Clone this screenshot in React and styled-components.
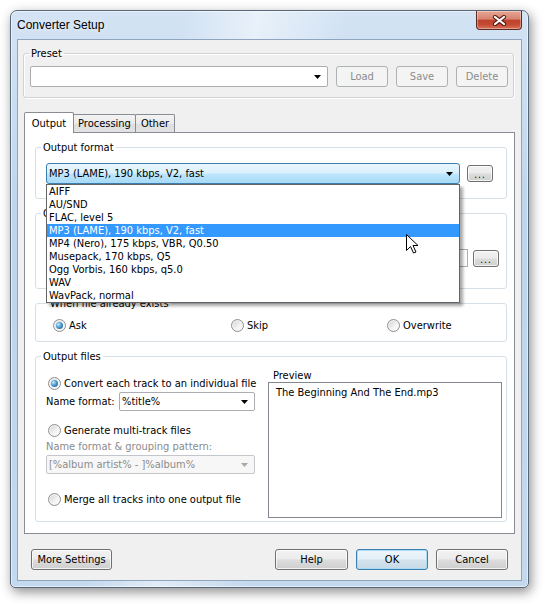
import React from 'react';
import styled, { createGlobalStyle, css } from 'styled-components';

const GlobalStyle = createGlobalStyle`
  html, body {
    margin: 0;
    padding: 0;
    background: #ffffff;
  }
  body {
    font-family: "DejaVu Sans Condensed", "Liberation Sans", Arial, sans-serif;
    font-size: 11px;
    color: #000;
  }
  * {
    box-sizing: border-box;
  }
`;

const Page = styled.div`
  width: 548px;
  height: 606px;
  padding: 10px 0 0 10px;
`;

const Window = styled.div`
  width: 519px;
  height: 578px;
  display: flex;
  flex-direction: column;
  padding: 0 6px 6px;
  border: 1px solid #56677a;
  border-radius: 7px 7px 5px 5px;
  background:
    linear-gradient(100deg, rgba(255,255,255,0) 28%, rgba(255,255,255,0.5) 40%, rgba(255,255,255,0) 55%),
    linear-gradient(#d3e3f4, #bfd5ed 35%, #c4d8ee);
  box-shadow: inset 0 0 0 1px rgba(255,255,255,0.55), 2px 4px 12px rgba(0,0,0,0.45);
`;

const TitleBar = styled.div`
  height: 28px;
  flex-shrink: 0;
  display: flex;
  justify-content: space-between;
  align-items: flex-start;
`;

const Title = styled.div`
  font-family: "Liberation Sans", Arial, sans-serif;
  font-size: 12px;
  line-height: 28px;
  text-shadow: 0 0 6px rgba(255,255,255,0.9);
`;

const CloseButton = styled.div`
  width: 46px;
  height: 19px;
  display: flex;
  align-items: center;
  justify-content: center;
  border: 1px solid #5b2a24;
  border-top: none;
  border-radius: 0 0 4px 4px;
  background: linear-gradient(#e6a797 0%, #d8826f 45%, #c0412b 52%, #c44b33 75%, #d87157 100%);
  box-shadow: inset 0 0 0 1px rgba(255,255,255,0.35);
`;

const Client = styled.div`
  flex: 1;
  display: flex;
  flex-direction: column;
  background: #f0f0f0;
  border: 1px solid #8fa4bd;
`;

const Group = styled.fieldset`
  margin: 0;
  min-width: 0;
  border: 1px solid #d5dfe5;
  border-radius: 3px;
`;

const Legend = styled.legend`
  padding: 0 2px;
  margin-left: -5px;
  line-height: 13px;
`;

const PresetGroup = styled(Group)`
  margin: 7px 7px 0 5px;
  padding: 6px 5px 10px 6px;
  border-color: #d2d2d2;
  box-shadow: inset 1px 1px 0 #fff, 1px 1px 0 #fff;
`;

const PresetLegend = styled(Legend)`
  margin-left: -1px;
`;

const PresetRow = styled.div`
  display: flex;
  gap: 8px;
  height: 21px;
`;

const Button = styled.button`
  font: inherit;
  color: #000;
  width: ${p => p.$w}px;
  height: ${p => p.$h || 21}px;
  padding: 0;
  flex-shrink: 0;
  border: 1px solid #707070;
  border-radius: 3px;
  background: linear-gradient(#f2f2f2 0%, #ebebeb 49%, #dddddd 51%, #cfcfcf 100%);
  box-shadow: inset 0 0 0 1px rgba(255,255,255,0.75);
  ${p => p.disabled && css`
    color: #8c8c8c;
    border-color: #adb2b5;
    background: #f4f4f4;
    box-shadow: none;
  `}
  ${p => p.$default && css`
    border-color: #3c7fb1;
    background: linear-gradient(#eef6fb 0%, #e4eff7 49%, #d4e4ef 51%, #c6d9e6 100%);
    box-shadow: inset 0 0 0 1px #a9dbf5;
  `}
`;

const DotsButton = styled(Button)`
  font-size: 10px;
  line-height: 10px;
  padding-top: 3px;
  letter-spacing: 1px;
`;

const Combo = styled.div`
  position: relative;
  display: flex;
  align-items: center;
  justify-content: space-between;
  flex: ${p => (p.$w ? 'none' : 1)};
  width: ${p => (p.$w ? `${p.$w}px` : 'auto')};
  height: ${p => p.$h || 21}px;
  padding: 0 6px 0 2px;
  border: 1px solid #abadb3;
  border-radius: 2px;
  background: #fff;
  white-space: nowrap;
  ${p => p.$open && css`
    border-color: #3c7fb1;
    border-radius: 3px;
    background: linear-gradient(#eaf6fd 0%, #d9f0fc 48%, #bee6fd 52%, #a7d9f5 100%);
  `}
  ${p => p.$disabled && css`
    color: #8b8b8b;
    border-color: #c3c6cb;
    background: #f7f7f7;
  `}
`;

const DropList = styled.div`
  position: absolute;
  top: calc(100% + 1px);
  left: -1px;
  width: 414px;
  border: 1px solid #646464;
  background: #fff;
  box-shadow: 3px 3px 3px rgba(0,0,0,0.35);
  z-index: 10;
`;

const DropItem = styled.div`
  height: 13px;
  line-height: 13px;
  padding-left: 2px;
  ${p => p.$selected && css`
    background: #3399ff;
    color: #fff;
  `}
`;

const Cursor = styled.svg`
  position: absolute;
  left: 359px;
  top: 49px;
`;

const TabStrip = styled.div`
  display: flex;
  align-items: flex-end;
  height: 20px;
  margin: 14px 6px 0;
  position: relative;
  z-index: 1;
`;

const Tab = styled.div`
  width: ${p => p.$w}px;
  height: ${p => (p.$active ? 21 : 18)}px;
  margin-left: ${p => (p.$first ? 0 : -1)}px;
  margin-bottom: ${p => (p.$active ? -1 : 0)}px;
  display: flex;
  align-items: center;
  justify-content: center;
  border: 1px solid #898c95;
  border-bottom: none;
  border-radius: 2px 2px 0 0;
  background: ${p => (p.$active ? '#fff' : 'linear-gradient(#f3f3f3, #ebebeb 50%, #dedede 51%, #e2e2e2)')};
  position: relative;
  z-index: ${p => (p.$active ? 2 : 1)};
`;

const TabPanel = styled.div`
  height: 402px;
  margin: 0 6px;
  padding: 8px 7px 11px 10px;
  display: flex;
  flex-direction: column;
  gap: 8px;
  border: 1px solid #898c95;
  background: #fff;
`;

const FormatGroup = styled(Group)`
  padding: 9px 0 14px 10px;
`;

const PathGroup = styled(Group)`
  padding: 6px 0 21px 10px;
`;

const ExistsGroup = styled(Group)`
  padding: 9px 0 9px 17px;
`;

const FilesGroup = styled(Group)`
  padding: 6px 4px 3px 10px;
`;

const FieldRow = styled.div`
  display: flex;
  align-items: center;
  gap: ${p => p.$gap}px;
  height: ${p => p.$h}px;
  margin-top: ${p => p.$top || 0}px;
`;

const TextField = styled.div`
  width: ${p => p.$w}px;
  height: 18px;
  border: 1px solid #abadb3;
  background: #fff;
`;

const RadioCircle = styled.span`
  width: 13px;
  height: 13px;
  flex-shrink: 0;
  display: inline-flex;
  align-items: center;
  justify-content: center;
  border: 1px solid #8e8f8f;
  border-radius: 50%;
  background: linear-gradient(135deg, #cfcfcf, #f4f4f4 60%, #ffffff);
  box-shadow: inset 0 0 0 1px #f6f6f6;
  &::after {
    content: '';
    display: ${p => (p.$checked ? 'block' : 'none')};
    width: 7px;
    height: 7px;
    border-radius: 50%;
    background: radial-gradient(circle at 35% 35%, #c6ecfc 0%, #4a9bd4 45%, #1c4f80 100%);
  }
`;

const RadioLabel = styled.label`
  display: flex;
  align-items: center;
  gap: 3px;
  height: 13px;
  line-height: 13px;
  white-space: nowrap;
  margin-left: ${p => p.$indent || 0}px;
  margin-top: ${p => p.$top || 0}px;
`;

const ExistsRow = styled.div`
  display: grid;
  grid-template-columns: 178px 156px auto;
  height: 13px;
`;

const FilesBody = styled.div`
  display: grid;
  grid-template-columns: 209px 234px;
  column-gap: 13px;
`;

const LeftColumn = styled.div`
  display: flex;
  flex-direction: column;
`;

const RightColumn = styled.div`
  display: flex;
  flex-direction: column;
`;

const NameLabel = styled.span`
  width: 73px;
  flex-shrink: 0;
`;

const GrayLabel = styled.div`
  color: #8b8b8b;
  line-height: 13px;
  margin-top: 3px;
  white-space: nowrap;
`;

const PreviewLabel = styled.div`
  line-height: 13px;
  margin-left: 5px;
`;

const PreviewBox = styled.div`
  height: 136px;
  padding: 3px 7px;
  line-height: 13px;
  border: 1px solid #828790;
  background: #fff;
  white-space: nowrap;
`;

const ButtonBar = styled.div`
  display: flex;
  gap: 8px;
  height: 21px;
  margin: 15px 13px 0;
`;

const Spacer = styled.div`
  flex: 1;
`;

const Arrow = ({ color = '#000' }) => (
  <svg width="7" height="4" viewBox="0 0 7 4">
    <path d="M0 0H7L3.5 4Z" fill={color} />
  </svg>
);

const CloseIcon = () => (
  <svg width="15" height="11" viewBox="0 0 15 11">
    <path d="M3 2 L12 9 M12 2 L3 9" stroke="#5a1d14" strokeWidth="4.2" strokeLinecap="round" />
    <path d="M3 2 L12 9 M12 2 L3 9" stroke="#ffffff" strokeWidth="2.2" strokeLinecap="round" />
  </svg>
);

const formats = [
  'AIFF',
  'AU/SND',
  'FLAC, level 5',
  'MP3 (LAME), 190 kbps, V2, fast',
  'MP4 (Nero), 175 kbps, VBR, Q0.50',
  'Musepack, 170 kbps, Q5',
  'Ogg Vorbis, 160 kbps, q5.0',
  'WAV',
  'WavPack, normal',
];

const Radio = ({ checked, children, indent, top }) => (
  <RadioLabel $indent={indent} $top={top}>
    <RadioCircle $checked={checked} />
    {children}
  </RadioLabel>
);

export default function App() {
  return (
    <>
      <GlobalStyle />
      <Page>
        <Window>
          <TitleBar>
            <Title>Converter Setup</Title>
            <CloseButton>
              <CloseIcon />
            </CloseButton>
          </TitleBar>
          <Client>
            <PresetGroup>
              <PresetLegend>Preset</PresetLegend>
              <PresetRow>
                <Combo>
                  <span />
                  <Arrow />
                </Combo>
                <Button $w={52} disabled>Load</Button>
                <Button $w={52} disabled>Save</Button>
                <Button $w={52} disabled>Delete</Button>
              </PresetRow>
            </PresetGroup>

            <TabStrip>
              <Tab $w={50} $first $active>Output</Tab>
              <Tab $w={63}>Processing</Tab>
              <Tab $w={40}>Other</Tab>
            </TabStrip>
            <TabPanel>
              <FormatGroup>
                <Legend>Output format</Legend>
                <FieldRow $gap={7} $h={21}>
                  <Combo $w={414} $open>
                    <span>MP3 (LAME), 190 kbps, V2, fast</span>
                    <Arrow />
                    <DropList>
                      {formats.map(f => (
                        <DropItem key={f} $selected={f.startsWith('MP3')}>{f}</DropItem>
                      ))}
                      <Cursor width="13" height="20" viewBox="0 0 13 20">
                        <path d="M0.5 0.5 V16.5 L4.5 12.5 L7.5 19 L10 18 L7 11.5 H12 Z" fill="#fff" stroke="#000" strokeWidth="1" strokeLinejoin="round" />
                      </Cursor>
                    </DropList>
                  </Combo>
                  <DotsButton $w={26} $h={17}>...</DotsButton>
                </FieldRow>
              </FormatGroup>

              <PathGroup>
                <Legend>Output path</Legend>
                <Radio>Source track folder</Radio>
                <FieldRow $gap={5} $h={18} $top={10}>
                  <TextField $w={422} />
                  <DotsButton $w={26} $h={17}>...</DotsButton>
                </FieldRow>
              </PathGroup>

              <ExistsGroup>
                <Legend>When file already exists</Legend>
                <ExistsRow>
                  <Radio checked>Ask</Radio>
                  <Radio>Skip</Radio>
                  <Radio>Overwrite</Radio>
                </ExistsRow>
              </ExistsGroup>

              <FilesGroup>
                <Legend>Output files</Legend>
                <FilesBody>
                  <LeftColumn>
                    <Radio checked indent={2} top={8}>Convert each track to an individual file</Radio>
                    <FieldRow $gap={0} $h={19} $top={2}>
                      <NameLabel>Name format:</NameLabel>
                      <Combo $w={136} $h={19}>
                        <span>%title%</span>
                        <Arrow />
                      </Combo>
                    </FieldRow>
                    <Radio indent={2} top={13}>Generate multi-track files</Radio>
                    <GrayLabel>Name format &amp; grouping pattern:</GrayLabel>
                    <FieldRow $gap={0} $h={19} $top={2}>
                      <Combo $w={209} $h={19} $disabled>
                        <span>[%album artist% - ]%album%</span>
                        <Arrow color="#a8a8a8" />
                      </Combo>
                    </FieldRow>
                    <Radio indent={2} top={19}>Merge all tracks into one output file</Radio>
                  </LeftColumn>
                  <RightColumn>
                    <PreviewLabel>Preview</PreviewLabel>
                    <PreviewBox>The Beginning And The End.mp3</PreviewBox>
                  </RightColumn>
                </FilesBody>
              </FilesGroup>
            </TabPanel>

            <ButtonBar>
              <Button $w={81}>More Settings</Button>
              <Spacer />
              <Button $w={73}>Help</Button>
              <Button $w={72} $default>OK</Button>
              <Button $w={72}>Cancel</Button>
            </ButtonBar>
          </Client>
        </Window>
      </Page>
    </>
  );
}
